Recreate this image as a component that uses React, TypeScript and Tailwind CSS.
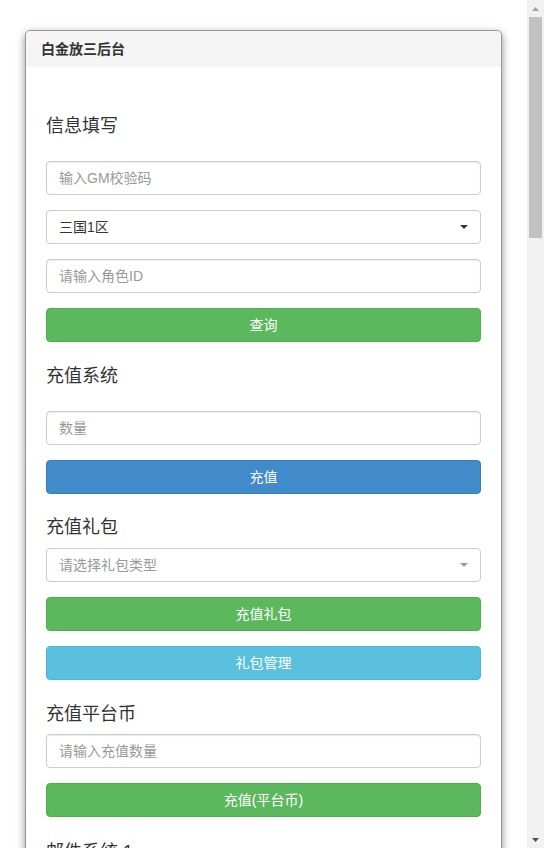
import React from "react";

const font = { fontFamily: '"Liberation Sans", "Noto Sans CJK SC", sans-serif' };

function Heading({ children, cls }: { children: React.ReactNode; cls: string }) {
  return <h3 className={`text-[18px] leading-[20px] text-[#333] font-normal ${cls}`}>{children}</h3>;
}

function Input({ placeholder, cls = "" }: { placeholder: string; cls?: string }) {
  return (
    <input
      readOnly
      placeholder={placeholder}
      className={`block w-full h-[34px] px-[12px] border border-[#ccc] rounded-[4px] text-[14px] text-[#555] placeholder:text-[#999] shadow-[inset_0_1px_1px_rgba(0,0,0,0.075)] outline-none bg-white ${cls}`}
      style={font}
    />
  );
}

function Select({ text, muted, cls = "" }: { text: string; muted?: boolean; cls?: string }) {
  return (
    <div
      className={`flex items-center justify-between w-full h-[34px] pl-[12px] pr-[12px] border border-[#ccc] rounded-[4px] bg-white text-[14px] ${muted ? "text-[#999]" : "text-[#333]"} ${cls}`}
    >
      <span>{text}</span>
      <svg width="8" height="4" viewBox="0 0 8 4">
        <path d="M0 0 L8 0 L4 4 Z" fill={muted ? "#999" : "#333"} />
      </svg>
    </div>
  );
}

function Button({ children, color, cls = "" }: { children: React.ReactNode; color: string; cls?: string }) {
  return (
    <button className={`block w-full h-[34px] rounded-[4px] border text-white text-[14px] ${color} ${cls}`} style={font}>
      {children}
    </button>
  );
}

export default function App() {
  const green = "bg-[#5cb85c] border-[#4cae4c]";
  return (
    <div className="flex w-[544px] h-[848px] overflow-hidden bg-white" style={font}>
      <div className="flex-1 pt-[30px]">
        <div className="ml-[25px] w-[477px] border border-[#999] rounded-[5px] bg-white shadow-[0_3px_9px_rgba(0,0,0,0.45)]">
          <div className="h-[36px] bg-[#f5f5f5] rounded-t-[5px] pl-[15px] flex items-center text-[14px] font-bold text-[#333]">
            白金放三后台
          </div>
          <div className="pl-[20px] pr-[20px] pb-[40px]">
            <Heading cls="mt-[49px]">信息填写</Heading>
            <Input placeholder="输入GM校验码" cls="mt-[25px]" />
            <Select text="三国1区" cls="mt-[15px]" />
            <Input placeholder="请输入角色ID" cls="mt-[15px]" />
            <Button color={green} cls="mt-[15px]">查询</Button>

            <Heading cls="mt-[24px]">充值系统</Heading>
            <Input placeholder="数量" cls="mt-[25px]" />
            <Button color="bg-[#428bca] border-[#357ebd]" cls="mt-[15px]">充值</Button>

            <Heading cls="mt-[23px]">充值礼包</Heading>
            <Select text="请选择礼包类型" muted cls="mt-[11px]" />
            <Button color={green} cls="mt-[15px]">充值礼包</Button>
            <Button color="bg-[#5bc0de] border-[#46b8da]" cls="mt-[15px]">礼包管理</Button>

            <Heading cls="mt-[24px]">充值平台币</Heading>
            <Input placeholder="请输入充值数量" cls="mt-[10px]" />
            <Button color={green} cls="mt-[15px]">充值(平台币)</Button>

            <Heading cls="mt-[25px]">邮件系统 1</Heading>
            <Input placeholder="请输入邮件标题" cls="mt-[25px]" />
          </div>
        </div>
      </div>
      <div className="w-[17px] h-full bg-[#f1f1f1] flex flex-col items-center">
        <div className="h-[17px] w-full flex items-center justify-center">
          <svg width="7" height="4" viewBox="0 0 7 4">
            <path d="M0 4 L7 4 L3.5 0 Z" fill="#a3a3a3" />
          </svg>
        </div>
        <div className="w-[13px] h-[221px] bg-[#c1c1c1]" />
        <div className="flex-1" />
        <div className="h-[17px] w-full flex items-center justify-center">
          <svg width="7" height="4" viewBox="0 0 7 4">
            <path d="M0 0 L7 0 L3.5 4 Z" fill="#505050" />
          </svg>
        </div>
      </div>
    </div>
  );
}
